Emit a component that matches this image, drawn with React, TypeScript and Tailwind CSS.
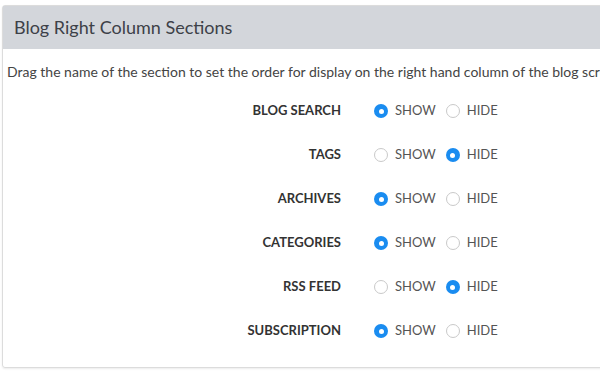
import React, { useState } from 'react';

type Choice = 'show' | 'hide';

const sections: { name: string; value: Choice }[] = [
  { name: 'Blog Search', value: 'show' },
  { name: 'Tags', value: 'hide' },
  { name: 'Archives', value: 'show' },
  { name: 'Categories', value: 'show' },
  { name: 'RSS Feed', value: 'hide' },
  { name: 'Subscription', value: 'show' },
];

function Radio({ checked, label, onClick }: { checked: boolean; label: string; onClick: () => void }) {
  return (
    <button onClick={onClick} className="flex items-center gap-[7px] text-[13px] text-[#555]">
      {checked ? (
        <span className="flex h-[14px] w-[14px] items-center justify-center rounded-full bg-[#1a8cf0]">
          <span className="h-[5px] w-[5px] rounded-full bg-white" />
        </span>
      ) : (
        <span className="h-[14px] w-[14px] rounded-full border border-[#c9c9c9] bg-white" />
      )}
      <span>{label}</span>
    </button>
  );
}

export default function App() {
  const [values, setValues] = useState<Choice[]>(sections.map(s => s.value));

  const setAt = (i: number, v: Choice) => setValues(prev => prev.map((p, j) => (j === i ? v : p)));

  return (
    <div className="h-[378px] w-[600px] overflow-hidden bg-white pl-[2px] pt-[5px] font-['Lato',sans-serif]">
      <div className="w-[620px] rounded-[3px] border border-[#dcdcdc] shadow-[0_1px_2px_rgba(0,0,0,0.08)]">
        {/* Header */}
        <div className="flex h-[43px] items-center bg-[#d3d6db] pl-[11px] text-[18px] text-[#3d4148]">
          Blog Right Column Sections
        </div>

        <div className="pb-[27px]">
          <p className="whitespace-nowrap pl-[4px] pt-[13px] text-[14px] leading-[20px] text-[#444]">
            Drag the name of the section to set the order for display on the right hand column of the blog screen.
          </p>

          <div className="mt-[20px] flex flex-col gap-[26px]">
            {sections.map((s, i) => (
              <div key={s.name} className="flex h-[18px] items-center">
                <div className="w-[338px] text-right text-[13px] font-bold uppercase text-[#333]">{s.name}</div>
                <div className="ml-[33px] flex items-center gap-[10px]">
                  <Radio checked={values[i] === 'show'} label="SHOW" onClick={() => setAt(i, 'show')} />
                  <Radio checked={values[i] === 'hide'} label="HIDE" onClick={() => setAt(i, 'hide')} />
                </div>
              </div>
            ))}
          </div>
        </div>
      </div>
    </div>
  );
}
